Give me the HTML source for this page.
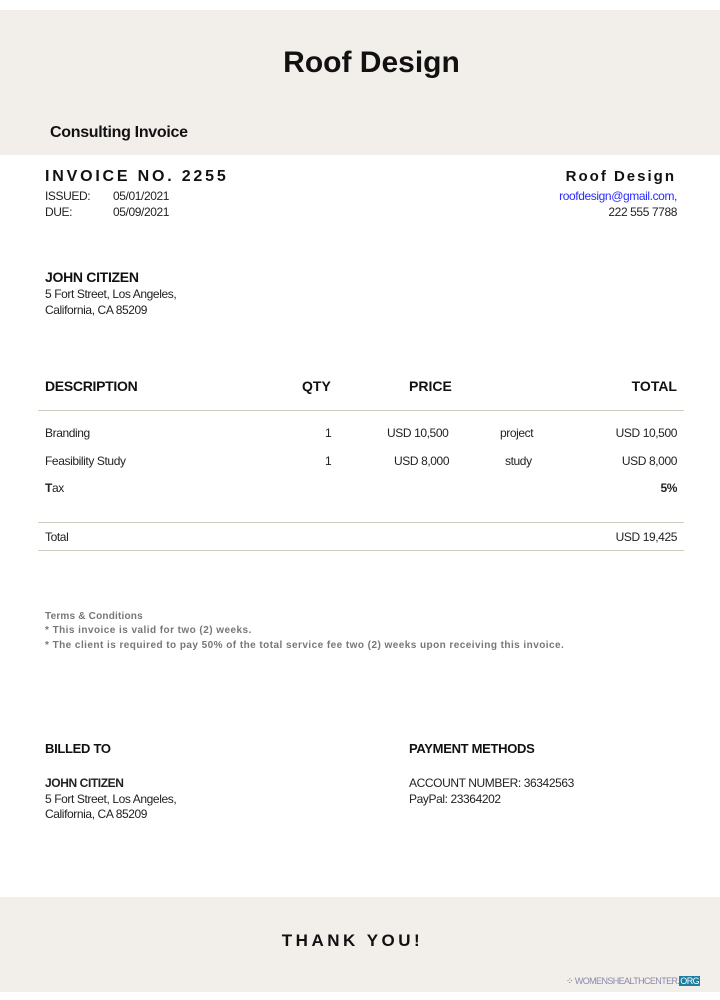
<!DOCTYPE html>
<html><head><meta charset="utf-8"><style>
*{margin:0;padding:0;box-sizing:border-box}
body{width:720px;height:1000px;background:#fff;position:relative;font-family:"Liberation Sans",Arial,sans-serif;color:#111;overflow:hidden}
.a{position:absolute;white-space:nowrap}
.band{position:absolute;left:0;width:720px;background:#f2eeea}
.s{font-size:12px;letter-spacing:-0.4px;color:#222}
.b{font-weight:bold}
.hr{position:absolute;left:38px;width:646px;height:1px;background:#cfccc0}
.r{text-align:right}
.g{color:#777;font-size:10px;font-weight:bold;letter-spacing:0.45px}
</style></head><body>
<div class="band" style="top:10px;height:145px"></div>
<div class="a b" style="top:46px;left:0;width:743px;text-align:center;font-size:30px">Roof Design</div>
<div class="a b" style="top:124px;left:50px;font-size:16px;letter-spacing:-0.3px">Consulting Invoice</div>

<div class="a b" style="top:168px;left:45px;font-size:16px;letter-spacing:2.8px">INVOICE NO. 2255</div>
<div class="a s" style="top:189px;left:45px">ISSUED:</div><div class="a s" style="top:189px;left:113px">05/01/2021</div>
<div class="a s" style="top:205px;left:45px">DUE:</div><div class="a s" style="top:205px;left:113px">05/09/2021</div>
<div class="a b r" style="top:168px;right:44px;font-size:15px;letter-spacing:2px">Roof Design</div>
<div class="a s r" style="top:189px;right:43px;color:#2a2aff">roofdesign@gmail.com,</div>
<div class="a s r" style="top:205px;right:43px">222 555 7788</div>

<div class="a b" style="top:269px;left:45px;font-size:14px;letter-spacing:-0.3px">JOHN CITIZEN</div>
<div class="a s" style="top:287px;left:45px">5 Fort Street, Los Angeles,</div>
<div class="a s" style="top:303px;left:45px">California, CA 85209</div>

<div class="a b" style="top:378px;left:45px;font-size:14px;letter-spacing:-0.3px">DESCRIPTION</div>
<div class="a b" style="top:378px;left:302px;font-size:14px">QTY</div>
<div class="a b" style="top:378px;left:409px;font-size:14px">PRICE</div>
<div class="a b r" style="top:378px;right:43px;font-size:14px">TOTAL</div>
<div class="hr" style="top:410px"></div>
<div class="a s" style="top:426px;left:45px">Branding</div>
<div class="a s" style="top:426px;left:325px">1</div>
<div class="a s" style="top:426px;left:387px">USD 10,500</div>
<div class="a s" style="top:426px;left:500px">project</div>
<div class="a s r" style="top:426px;right:43px">USD 10,500</div>
<div class="a s" style="top:454px;left:45px">Feasibility Study</div>
<div class="a s" style="top:454px;left:325px">1</div>
<div class="a s" style="top:454px;left:394px">USD 8,000</div>
<div class="a s" style="top:454px;left:505px">study</div>
<div class="a s r" style="top:454px;right:43px">USD 8,000</div>
<div class="a s" style="top:481px;left:45px"><b>T</b>ax</div>
<div class="a s b r" style="top:481px;right:43px">5%</div>
<div class="hr" style="top:522px"></div>
<div class="a s" style="top:530px;left:45px">Total</div>
<div class="a s r" style="top:530px;right:43px">USD 19,425</div>
<div class="hr" style="top:550px"></div>

<div class="a g" style="top:611px;left:45px;letter-spacing:0.2px">Terms &amp; Conditions</div>
<div class="a g" style="top:625px;left:45px">* This invoice is valid for two (2) weeks.</div>
<div class="a g" style="top:640px;left:45px">* The client is required to pay 50% of the total service fee two (2) weeks upon receiving this invoice.</div>

<div class="a b" style="top:741px;left:45px;font-size:13px;letter-spacing:-0.3px">BILLED TO</div>
<div class="a b" style="top:741px;left:409px;font-size:13px;letter-spacing:-0.3px">PAYMENT METHODS</div>
<div class="a s b" style="top:776px;left:45px">JOHN CITIZEN</div>
<div class="a s" style="top:792px;left:45px">5 Fort Street, Los Angeles,</div>
<div class="a s" style="top:807px;left:45px">California, CA 85209</div>
<div class="a s" style="top:776px;left:409px">ACCOUNT NUMBER: 36342563</div>
<div class="a s" style="top:792px;left:409px">PayPal: 23364202</div>

<div class="band" style="top:897px;height:95px"></div>
<div class="a b" style="top:931px;left:0;width:705px;text-align:center;font-size:17px;letter-spacing:3.5px">THANK YOU!</div>
<div class="a" style="top:976px;left:566px;font-size:9px;color:#8a8aa8;letter-spacing:-0.6px"><span style="color:#7b3fa0">⁘</span> WOMENSHEALTHCENTER.<span style="background:#1d7ea0;color:#fff;padding:0 1px">ORG</span></div>
</body></html>
